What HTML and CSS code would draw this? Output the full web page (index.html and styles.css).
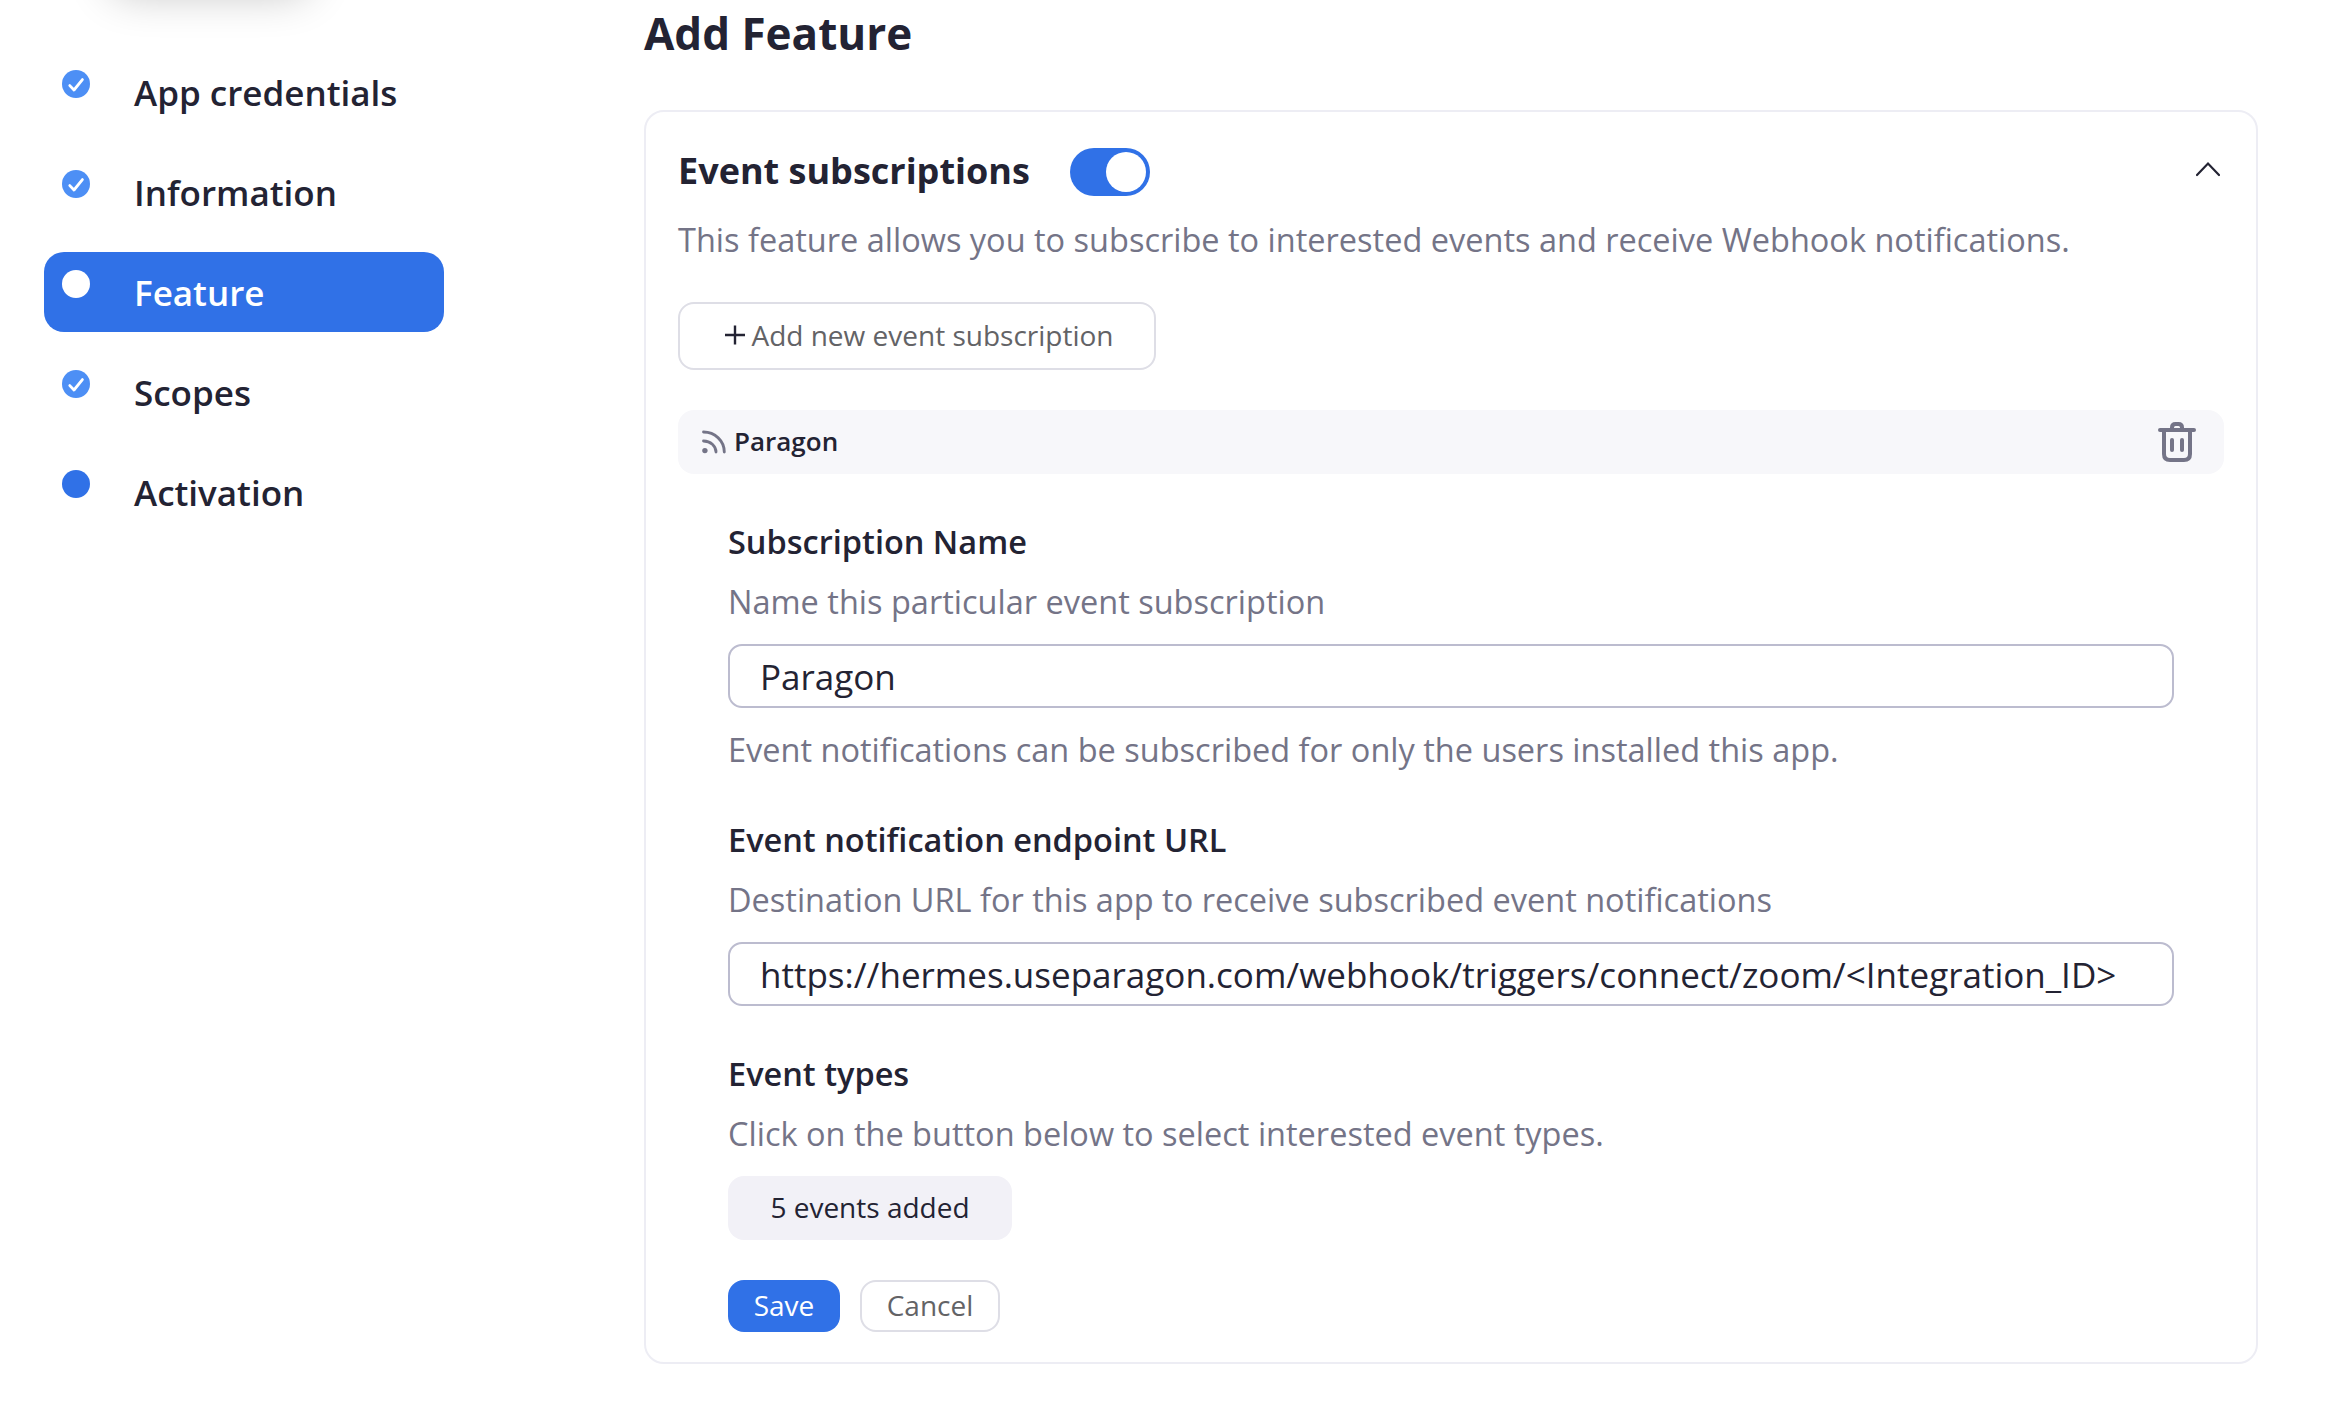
FILE: index.html
```
<!DOCTYPE html>
<html lang="en">
<head>
<meta charset="utf-8">
<title>Add Feature</title>
<link rel="stylesheet" href="styles.css">
</head>
<body>
<div class="header-shadow"></div>
<div class="page">
  <nav class="steps">
    <a class="step"><svg class="dot" viewBox="0 0 28 28"><circle class="done" cx="14" cy="14" r="14"/><path class="tick" d="M7.8 15.6L12 20L20.4 9.6"/></svg><span>App credentials</span></a>
    <a class="step"><svg class="dot" viewBox="0 0 28 28"><circle class="done" cx="14" cy="14" r="14"/><path class="tick" d="M7.8 15.6L12 20L20.4 9.6"/></svg><span>Information</span></a>
    <a class="step active"><svg class="dot" viewBox="0 0 28 28"><circle class="current" cx="14" cy="14" r="14"/></svg><span>Feature</span></a>
    <a class="step"><svg class="dot" viewBox="0 0 28 28"><circle class="done" cx="14" cy="14" r="14"/><path class="tick" d="M7.8 15.6L12 20L20.4 9.6"/></svg><span>Scopes</span></a>
    <a class="step"><svg class="dot" viewBox="0 0 28 28"><circle class="pending" cx="14" cy="14" r="14"/></svg><span>Activation</span></a>
  </nav>
  <main class="content">
    <h1 class="title">Add Feature</h1>
    <section class="card">
      <header class="card-head">
        <h2 class="card-title">Event subscriptions</h2>
        <span class="toggle"><span class="knob"></span></span>
        <svg class="chevron" viewBox="0 0 24 16"><path d="M1 14L12 2.5L23 14"/></svg>
      </header>
      <p class="text">This feature allows you to subscribe to interested events and receive Webhook notifications.</p>
      <button class="btn add"><svg class="plus" viewBox="0 0 20 20"><path d="M10 0.5V19.5M0 10H20"/></svg>Add new event subscription</button>
      <div class="sub-bar">
        <svg class="rss" viewBox="0 0 24 24"><path d="M1.5 2C13 2 22.3 11 22.3 22M1.5 11C8.5 11 14 16 14 22"/><circle cx="2.9" cy="20.6" r="2.7"/></svg>
        <span class="sub-name">Paragon</span>
        <svg class="trash" viewBox="0 0 38 40"><path d="M2 8H36M14 8V5.5Q14 2 17.5 2H20.5Q24 2 24 5.5V8M6 8V32Q6 38 12 38H26Q32 38 32 32V8M14 18V28M24 18V28"/></svg>
      </div>
      <form class="form">
        <label class="label">Subscription Name</label>
        <p class="text">Name this particular event subscription</p>
        <div class="input">Paragon</div>
        <p class="text note">Event notifications can be subscribed for only the users installed this app.</p>
        <label class="label next">Event notification endpoint URL</label>
        <p class="text">Destination URL for this app to receive subscribed event notifications</p>
        <div class="input">https://hermes.useparagon.com/webhook/triggers/connect/zoom/&lt;Integration_ID&gt;</div>
        <label class="label next">Event types</label>
        <p class="text">Click on the button below to select interested event types.</p>
        <button type="button" class="btn events">5 events added</button>
        <div class="actions">
          <button type="button" class="btn save">Save</button>
          <button type="button" class="btn cancel">Cancel</button>
        </div>
      </form>
    </section>
  </main>
</div>
</body>
</html>
```
FILE: styles.css
```
* { box-sizing: border-box; margin: 0; padding: 0; }
body {
  width: 2334px; height: 1410px; overflow: hidden;
  background: #fff; color: #232333;
  font-family: "Open Sans", "Noto Sans", sans-serif;
}
.header-shadow {
  position: absolute; left: 110px; top: -104px; width: 200px; height: 90px;
  border-radius: 20px; box-shadow: 0 8px 44px rgba(0, 0, 0, .24);
}
.page { display: flex; align-items: flex-start; }
.steps {
  width: 644px; padding: 52px 200px 0 44px;
  display: flex; flex-direction: column; gap: 20px;
}
.step {
  display: flex; align-items: flex-start; height: 80px;
  padding: 18px 18px 0; gap: 44px; border-radius: 20px;
  font-size: 35px; line-height: 46px; font-weight: 600; white-space: nowrap;
}
.active { background: #3071e7; color: #fff; }
.dot { width: 28px; height: 28px; flex: none; }
.done { fill: #4d8ff5; }
.current { fill: #fff; }
.pending { fill: #3071e7; }
.tick { fill: none; stroke: #fff; stroke-width: 2.8; stroke-linecap: round; stroke-linejoin: round; }

.content { width: 1614px; }
.title { height: 110px; padding-top: 3px; font-size: 44px; line-height: 60px; font-weight: 700; }
.card {
  height: 1254px; padding: 36px 32px; border: 2px solid #ededf4; border-radius: 20px;
}
.card-head { display: flex; align-items: center; height: 48px; }
.card-title { font-size: 36px; line-height: 48px; font-weight: 700; padding-bottom: 3px; width: 392px; white-space: nowrap; }
.toggle {
  width: 80px; height: 48px; padding: 4px; border-radius: 24px; background: #3071e7;
  display: flex; justify-content: flex-end;
}
.knob { width: 40px; height: 40px; border-radius: 50%; background: #fff; }
.chevron { width: 24px; height: 16px; margin: 0 4px 7px auto; fill: none; stroke: #232333; stroke-width: 2.2; stroke-linecap: round; }
.text { font-size: 32.5px; line-height: 44px; color: #747487; white-space: nowrap; }
.card > .text { margin-top: 22px; }
.btn {
  display: flex; align-items: center; justify-content: center; padding-bottom: 2px;
  font: 400 28px/40px "Open Sans", "Noto Sans", sans-serif;
  border: 2px solid #dedee6; border-radius: 16px; background: #fff; color: #636366; white-space: nowrap;
}
.add { width: 478px; height: 68px; margin-top: 40px; padding-left: 5px; gap: 6px; }
.plus { width: 20px; height: 20px; fill: none; stroke: #232333; stroke-width: 2.4; }
.sub-bar {
  display: flex; align-items: center; height: 64px; margin-top: 40px; padding: 0 28px 0 24px;
  border-radius: 16px; background: #f7f7fa;
}
.rss { width: 24px; height: 24px; margin-right: 8px; fill: none; stroke: #747487; stroke-width: 2.8; stroke-linecap: round; }
.rss circle { fill: #747487; stroke: none; }
.sub-name { font-size: 26px; line-height: 36px; font-weight: 600; padding-bottom: 2px; }
.trash { width: 38px; height: 40px; margin-left: auto; fill: none; stroke: #747487; stroke-width: 4; stroke-linecap: round; }
.form { padding: 46px 50px 0; }
.label { display: block; font-size: 32.5px; line-height: 44px; font-weight: 600; margin-bottom: 16px; }
.input {
  height: 64px; margin-top: 20px; padding: 0 30px; border: 2px solid #bcbccf; border-radius: 14px;
  font-size: 35.03px; line-height: 62px; white-space: nowrap;
}
.note { margin-top: 20px; }
.next { margin-top: 46px; }
.events { width: 284px; height: 64px; margin-top: 20px; border: 0; background: #f2f1f7; color: #232333; }
.actions { display: flex; gap: 20px; margin-top: 40px; }
.save { width: 112px; height: 52px; border: 0; background: #3071e7; color: #fff; }
.cancel { width: 140px; height: 52px; }
```
